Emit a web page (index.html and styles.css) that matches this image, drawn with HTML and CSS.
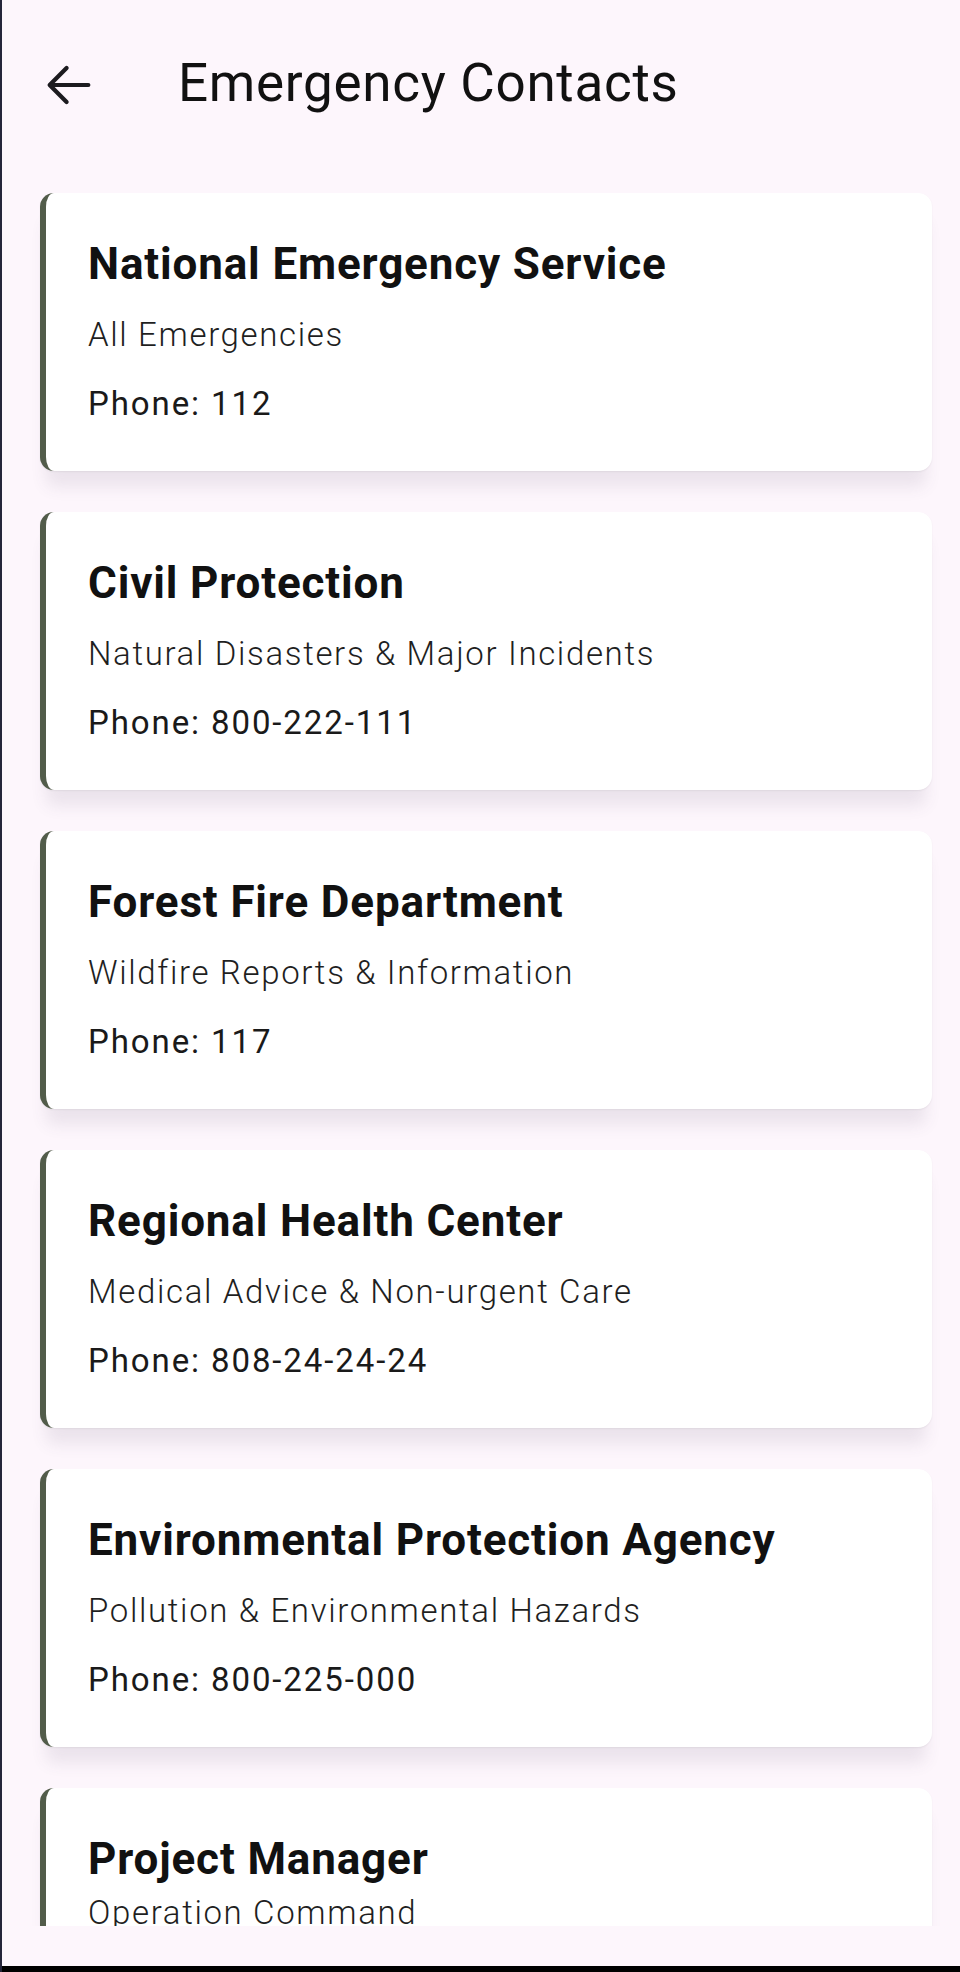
FILE: index.html
```html
<!DOCTYPE html>
<html lang="en">
<head>
<meta charset="utf-8">
<title>Emergency Contacts</title>
<link rel="stylesheet" href="styles.css">
</head>
<body>
<div class="screen">
  <header class="app-bar">
    <button class="back" aria-label="Back">
      <svg viewBox="0 0 24 24" width="58" height="58" fill="none" stroke="#1c1b1f" stroke-width="1.75" stroke-linecap="round" stroke-linejoin="round"><path d="M20 12H4.5M11 5l-7 7 7 7"/></svg>
    </button>
    <h1 class="title">Emergency Contacts</h1>
  </header>
  <main class="list">
    <section class="card">
      <h2 class="card-title">National Emergency Service</h2>
      <p class="card-sub">All Emergencies</p>
      <p class="card-phone">Phone: 112</p>
    </section>
    <section class="card">
      <h2 class="card-title">Civil Protection</h2>
      <p class="card-sub">Natural Disasters &amp; Major Incidents</p>
      <p class="card-phone">Phone: 800-222-111</p>
    </section>
    <section class="card">
      <h2 class="card-title">Forest Fire Department</h2>
      <p class="card-sub">Wildfire Reports &amp; Information</p>
      <p class="card-phone">Phone: 117</p>
    </section>
    <section class="card">
      <h2 class="card-title">Regional Health Center</h2>
      <p class="card-sub">Medical Advice &amp; Non-urgent Care</p>
      <p class="card-phone">Phone: 808-24-24-24</p>
    </section>
    <section class="card">
      <h2 class="card-title">Environmental Protection Agency</h2>
      <p class="card-sub">Pollution &amp; Environmental Hazards</p>
      <p class="card-phone">Phone: 800-225-000</p>
    </section>
    <section class="card card-compact">
      <h2 class="card-title">Project Manager</h2>
      <p class="card-sub">Operation Command</p>
      <p class="card-phone">Phone: 800-100-200</p>
    </section>
  </main>
  <div class="footer-space"></div>
  <div class="nav-bar"></div>
</div>
</body>
</html>
```
FILE: styles.css
```css
html, body {
  margin: 0;
  padding: 0;
}
body {
  background: #fdf6fc;
  font-family: Roboto, "Liberation Sans", Arial, sans-serif;
  color: #1c1b1f;
}
.screen {
  height: 1972px;
  display: flex;
  flex-direction: column;
  border-left: 2px solid #25253a;
  box-sizing: border-box;
  overflow: hidden;
}
.app-bar {
  flex: 0 0 170px;
  display: flex;
  align-items: center;
  padding-left: 38px;
  gap: 80px;
}
.back {
  width: 58px;
  height: 58px;
  padding: 0;
  border: 0;
  background: none;
  display: flex;
}
.title {
  margin: 0 0 5px 0;
  font-size: 53px;
  font-weight: 400;
  line-height: 64px;
  letter-spacing: 0.7px;
  color: #111;
}
.list {
  flex: 1 1 auto;
  overflow: hidden;
  display: flex;
  flex-direction: column;
  gap: 41px;
  padding: 23px 28px 0 38px;
}
.card {
  flex: 0 0 auto;
  height: 278px;
  box-sizing: border-box;
  background: #fff;
  border-left: 6px solid #525c4a;
  border-radius: 14px;
  padding: 45px 24px 0 42px;
  box-shadow: 0 22px 16px -6px rgba(80, 70, 100, 0.10), 0 1px 2px rgba(0, 0, 0, 0.06);
}
.card-title {
  margin: 0;
  font-size: 44px;
  font-weight: 700;
  line-height: 52px;
  letter-spacing: 0.85px;
  color: #111;
}
.card-sub {
  margin: 25px 0 0;
  font-size: 33px;
  font-weight: 300;
  line-height: 40px;
  letter-spacing: 1.65px;
  color: #1f1f1f;
}
.card-phone {
  margin: 29px 0 0;
  font-size: 33px;
  font-weight: 400;
  line-height: 40px;
  letter-spacing: 1.9px;
  color: #1a1a1a;
}
.card-compact .card-sub {
  margin-top: 8px;
}
.footer-space {
  flex: 0 0 40px;
}
.nav-bar {
  flex: 0 0 6px;
  background: #000;
}
```
